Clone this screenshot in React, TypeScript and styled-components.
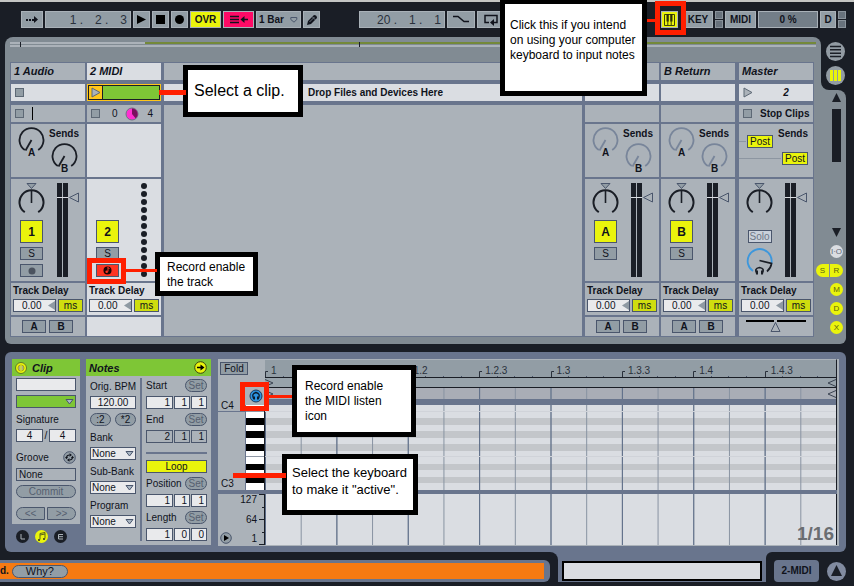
import React from "react";
import styled, { createGlobalStyle, css } from "styled-components";

const c = {
  ink: "#1a1e26",
  panel: "#818b93",
  slate: "#69758d",
  face: "#abb2b9",
  light: "#dadde2",
  button: "#929da5",
  edge: "#4a566c",
  field: "#e9eaec",
  yellow: "#eaf40c",
  lime: "#cfdd0f",
  green: "#7ec636",
  orange: "#f67a12",
  red: "#ff1f00",
  text: "#10131c",
};

const GlobalStyle = createGlobalStyle`
  *, *::before, *::after { box-sizing: border-box; }
  body { margin: 0; background: ${c.ink}; }
  button, input, select { font: inherit; color: inherit; margin: 0; padding: 0; border-radius: 0; }
  svg { display: block; flex: none; }
`;

const Page = styled.div`
  position: relative;
  display: flex;
  flex-direction: column;
  overflow: hidden;
  background: ${c.ink};
  color: ${c.text};
  font-family: "Liberation Sans", Arial, sans-serif;
  font-size: 10px;
  line-height: 12px;
`;

/* ---------- toolbar ---------- */

const Toolbar = styled.header`
  display: flex;
  align-items: flex-start;
  gap: 2px;
  height: 37px;
  padding: 9px 8px 0 21px;
  border-top: 2px solid #c4c6c4;
`;

const ToolButton = styled.button<{ $w: number; $bg?: string }>`
  display: flex;
  align-items: center;
  justify-content: center;
  flex: none;
  gap: 6px;
  width: ${(p) => p.$w}px;
  height: 17px;
  border: 1px solid #a9b1b8;
  background: ${(p) => p.$bg ?? "#929da5"};
  font-weight: bold;
`;

const TimeDisplay = styled.output`
  display: flex;
  align-items: center;
  justify-content: flex-end;
  gap: 12px;
  flex: none;
  width: 86px;
  height: 17px;
  padding-right: 3px;
  border: 1px solid #a9b1b8;
  background: #929da5;
  color: #2a313c;
  font-size: 12px;
`;

const TimePart = styled.span`
  text-align: right;
  white-space: pre;
`;

const Spacer = styled.div<{ $w?: number }>`
  flex: ${(p) => (p.$w ? "none" : "1")};
  width: ${(p) => (p.$w ? `${p.$w}px` : "auto")};
`;

const Leds = styled.div`
  display: grid;
  gap: 1px;
  width: 8px;
`;

const Led = styled.span`
  height: 8px;
  border: 1px solid #8a939b;
  background: #68727c;
`;

/* ---------- session view ---------- */

const Session = styled.main`
  display: flex;
  margin: 0 8px 8px 5px;
`;

const SessionBody = styled.div`
  flex: 1;
  min-width: 0;
  padding: 5px 5px 7px;
  border-radius: 8px 8px 0 6px;
  background: ${c.panel};
`;

const Overview = styled.div`
  display: grid;
  gap: 1px;
  position: relative;
  margin-bottom: 15px;
`;

const OverviewLane = styled.div`
  display: flex;
  height: 2px;
  background: ${c.face};
`;

const OverviewSpan = styled.span`
  flex: 1;
  margin-left: 135px;
  background: #74893a;
`;

const OverviewTick = styled.span<{ $x: string; $w: number }>`
  position: absolute;
  top: 0;
  left: ${(p) => p.$x};
  width: ${(p) => p.$w}px;
  height: 5px;
  background: ${c.ink};
`;

const Tracks = styled.div`
  display: flex;
  margin-right: 2px;
  padding: 1px;
  background: ${c.slate};
`;

const Track = styled.section<{ $after?: number }>`
  display: flex;
  flex-direction: column;
  flex: none;
  width: 74px;
  margin-right: ${(p) => p.$after ?? 0}px;
`;

const DropZone = styled.section`
  display: flex;
  flex-direction: column;
  flex: 1;
  margin: 0 3px;
`;

const cell = css<{ $on?: boolean }>`
  background: ${(p) => (p.$on ? c.light : c.face)};
`;

const TrackTitle = styled.h2<{ $on?: boolean }>`
  ${cell}
  height: 17px;
  margin: 0 0 4px;
  padding-left: 3px;
  font-size: 11px;
  font-style: italic;
  line-height: 17px;
`;

const ClipSlot = styled.div`
  display: flex;
  align-items: center;
  height: 17px;
  margin-bottom: 4px;
  padding: 0 4px;
  background: ${c.light};
  font-weight: bold;
`;

const DropHint = styled(ClipSlot)`
  padding-left: calc(50% - 65px);
`;

const DropBody = styled.div`
  flex: 1;
  background: ${c.face};
`;

const ActiveClip = styled.button`
  display: flex;
  height: 17px;
  margin-bottom: 4px;
  border: 1px solid #ffc61a;
  background: ${c.ink};
  padding: 1px;
  gap: 1px;
`;

const ClipLaunch = styled.span`
  display: flex;
  align-items: center;
  justify-content: center;
  width: 13px;
  height: 13px;
  background: #ffc61a;
`;

const ClipColor = styled.span`
  flex: 1;
  height: 13px;
  background: ${c.green};
`;

const StopRow = styled.div`
  display: flex;
  align-items: center;
  height: 17px;
  margin-bottom: 2px;
  padding: 0 4px;
  background: ${c.face};
`;

const StopButton = styled.button`
  flex: none;
  width: 9px;
  height: 9px;
  border: 1px solid #5d6875;
  background: ${c.button};
`;

const StopMeta = styled.span<{ $gap: number; $bold?: boolean }>`
  margin-left: ${(p) => p.$gap}px;
  font-weight: ${(p) => (p.$bold ? "bold" : "normal")};
  white-space: nowrap;
`;

const Caret = styled.span`
  width: 1px;
  height: 13px;
  margin-left: 8px;
  background: #000;
`;

const SendsCell = styled.div<{ $on?: boolean }>`
  ${cell}
  display: flex;
  height: 53px;
  margin-bottom: 2px;
  padding: 2px 0 0 7px;
  gap: 1px;
  font-weight: bold;
`;

const SendsSide = styled.div`
  display: flex;
  flex-direction: column;
  align-items: center;
  width: 36px;
  padding-top: 2px;
  gap: 2px;
`;

const MasterSends = styled.div`
  display: grid;
  grid-template-columns: 1fr auto;
  grid-template-rows: 22px 17px;
  height: 53px;
  margin-bottom: 2px;
  padding: 2px 5px 0 0;
  background: ${c.face};
`;

const SendRoute = styled.div`
  display: flex;
  align-items: flex-end;
`;

const SendsTitle = styled.span`
  padding-top: 2px;
  font-weight: bold;
`;

const WideRoute = styled.div`
  display: flex;
  align-items: flex-end;
  grid-column: 1 / -1;
`;

const Wire = styled.span<{ $grow?: boolean }>`
  flex: ${(p) => (p.$grow ? 1 : "none")};
  width: 7px;
  height: 1px;
  margin: 0 1px 6px 0;
  background: #8d96a1;
`;

const PostButton = styled.button`
  width: 26px;
  height: 13px;
  border: 1px solid ${c.edge};
  background: ${c.yellow};
  line-height: 11px;
`;

const MixerCell = styled.div<{ $on?: boolean; $gap?: number }>`
  ${cell}
  display: flex;
  gap: ${(p) => p.$gap ?? 12}px;
  height: 102px;
  margin-bottom: 2px;
  padding: 4px 0 0 7px;
`;

const MixerSide = styled.div`
  display: flex;
  flex-direction: column;
  align-items: center;
  width: 27px;
  gap: 4px;
`;

const KnobSpace = styled.div`
  height: 33px;
`;

const Activator = styled.button`
  width: 23px;
  height: 23px;
  border: 1px solid ${c.edge};
  background: ${c.yellow};
  font-size: 12px;
  font-weight: bold;
`;

const SmallButton = styled.button<{ $w?: number; $bg?: string; $bold?: boolean; $dim?: boolean }>`
  display: flex;
  align-items: center;
  justify-content: center;
  width: ${(p) => p.$w ?? 23}px;
  height: 13px;
  border: 1px solid ${c.edge};
  background: ${(p) => p.$bg ?? c.button};
  color: ${(p) => (p.$dim ? "#6d7787" : c.text)};
  font-weight: ${(p) => (p.$bold ? "bold" : "normal")};
`;

const SoloSpace = styled.div`
  height: 6px;
`;

const DelayCell = styled.div<{ $on?: boolean }>`
  ${cell}
  display: flex;
  flex-direction: column;
  gap: 2px;
  height: 32px;
  margin-bottom: 2px;
  padding: 2px;
`;

const DelayLabel = styled.label`
  font-weight: bold;
`;

const DelayRow = styled.div`
  display: flex;
  justify-content: space-between;
`;

const DelayField = styled.div`
  display: flex;
  align-items: center;
  width: 43px;
  height: 13px;
  border: 1px solid ${c.edge};
  background: ${c.field};
`;

const DelayInput = styled.input`
  width: 34px;
  height: 11px;
  padding-left: 8px;
  border: 0;
  background: transparent;
`;

const UnitButton = styled.button`
  width: 25px;
  height: 13px;
  border: 1px solid ${c.edge};
  background: ${c.lime};
  line-height: 10px;
`;

const CrossCell = styled.div<{ $on?: boolean }>`
  ${cell}
  display: flex;
  justify-content: center;
  gap: 3px;
  height: 19px;
  padding: 3px 1px 0 0;
`;

const MasterClip = styled.span`
  flex: 1;
  padding-left: 10px;
  font-style: italic;
  text-align: center;
`;

const Rail = styled.aside`
  display: flex;
  flex-direction: column;
  flex: none;
  width: 25px;
  background: linear-gradient(${c.ink} 20px, ${c.panel} 20px, ${c.panel} 53px, ${c.ink} 53px);
`;

const Notch = styled.div`
  display: flex;
  flex-direction: column;
  align-items: flex-end;
  gap: 5px;
  height: 53px;
  padding: 5px 1px 0 0;
  border-bottom-left-radius: 8px;
  background: ${c.ink};
`;

const RailBody = styled.div`
  display: flex;
  flex-direction: column;
  align-items: flex-end;
  flex: 1;
  padding: 3px 3px 10px 0;
  border-radius: 0 8px 6px 0;
  background: ${c.panel};
`;

const Scrollbar = styled.div`
  width: 9px;
  height: 53px;
  margin: 7px 2px auto 0;
  background: ${c.ink};
`;

const RailArrow = styled.button`
  margin-right: 2px;
  border: 0;
  background: none;
`;

const RailToggles = styled.div`
  display: grid;
  justify-items: end;
  gap: 6px;
  margin-top: 8px;
`;

const RailPair = styled.div`
  display: flex;
  gap: 1px;
`;

const RailToggle = styled.button<{ $off?: boolean; $shape?: string }>`
  width: 13px;
  height: 13px;
  border: 0;
  border-radius: ${(p) => p.$shape ?? "7px"};
  background: ${(p) => (p.$off ? c.light : c.yellow)};
  color: ${(p) => (p.$off ? "#5d6778" : "#5c6410")};
  font-size: 8px;
  line-height: 13px;
  white-space: nowrap;
`;

const RoundButton = styled.button`
  border: 0;
  border-radius: 50%;
  background: none;
`;

/* ---------- clip view ---------- */

const ClipView = styled.section`
  display: flex;
  margin: 0 8px 0 5px;
  padding: 7px;
  border-radius: 6px;
  background: ${c.slate};
`;

const ClipColumn = styled.div`
  display: flex;
  flex-direction: column;
  flex: none;
  width: 68px;
  margin-right: 6px;
`;

const BoxHeader = styled.h3`
  display: flex;
  align-items: center;
  height: 17px;
  margin: 0;
  padding: 0 4px 0 3px;
  gap: 5px;
  background: ${c.green};
  font-size: 11px;
  font-style: italic;
`;

const HeaderText = styled.span`
  flex: 1;
`;

const ClipBody = styled.div`
  display: flex;
  flex-direction: column;
  gap: 4px;
  padding: 2px 4px 4px;
  background: ${c.face};
`;

const Field = styled.input<{ $w?: number; $align?: string; $flat?: boolean }>`
  flex: none;
  width: ${(p) => (p.$w ? `${p.$w}px` : "100%")};
  height: 13px;
  padding: 0 2px;
  border: 1px solid ${c.edge};
  background: ${(p) => (p.$flat ? "transparent" : c.field)};
  text-align: ${(p) => p.$align ?? "left"};
`;

const Row = styled.div<{ $top?: number }>`
  display: flex;
  align-items: center;
  justify-content: space-between;
  height: 13px;
  margin-top: ${(p) => p.$top ?? 0}px;
`;

const Caption = styled.label`
  display: flex;
  align-items: flex-end;
  height: 13px;
  line-height: 11px;
  white-space: nowrap;
`;

const Pill = styled.button<{ $w?: number; $dim?: boolean; $shape?: string }>`
  display: flex;
  align-items: center;
  justify-content: center;
  flex: none;
  width: ${(p) => (p.$w ? `${p.$w}px` : "100%")};
  height: 13px;
  border: 1px solid ${c.edge};
  border-radius: ${(p) => p.$shape ?? "7px"};
  background: ${c.button};
  color: ${(p) => (p.$dim ? "#566070" : c.text)};
`;

const SelectBox = styled.div<{ $bg?: string }>`
  display: grid;
  align-items: center;
  height: 13px;
  border: 1px solid ${c.edge};
  background: ${(p) => p.$bg ?? c.field};

  > * { grid-area: 1 / 1; }
  > svg { justify-self: end; margin-right: 1px; pointer-events: none; }
`;

const Select = styled.select`
  appearance: none;
  width: 100%;
  height: 11px;
  padding-left: 1px;
  border: 0;
  background: transparent;
  line-height: 11px;
`;

const ModeIcons = styled.div`
  display: flex;
  gap: 6px;
  padding: 6px 0 0 4px;
`;

const NotesBox = styled.div`
  display: flex;
  flex-direction: column;
  flex: none;
  width: 125px;
  margin-right: 7px;
  background: ${c.face};
`;

const NotesBody = styled.div`
  display: flex;
  gap: 4px;
  padding: 2px 4px 4px;
`;

const NotesLeft = styled.div`
  display: flex;
  flex-direction: column;
  gap: 4px;
  width: 46px;
  padding-top: 1px;
`;

const NotesRight = styled.div`
  display: flex;
  flex-direction: column;
  flex: 1;
  gap: 4px;
  padding-top: 1px;
`;

const Divider = styled.div`
  width: 2px;
  background: ${c.slate};
`;

const Rule = styled.div`
  height: 2px;
  margin: 5px 0 2px;
  background: ${c.slate};
`;

const LoopButton = styled.button`
  height: 13px;
  border: 1px solid ${c.edge};
  background: ${c.yellow};
  line-height: 11px;
`;

/* ---------- note editor ---------- */

const Editor = styled.div`
  display: grid;
  grid-template-columns: 47px 1fr;
  grid-template-rows: 46px 85px 4px 51px;
  flex: 1;
  min-width: 0;
  border-right: 2px solid ${c.face};
  border-bottom: 1px solid ${c.face};
  background: ${c.slate};
  margin-bottom: -1px;
`;

const Gutter = styled.div`
  display: flex;
  flex-direction: column;
  justify-content: space-between;
  padding: 3px 2px 2px;
  background: ${c.face};
`;

const FoldButton = styled.button`
  width: 28px;
  height: 13px;
  border: 1px solid ${c.edge};
  background: ${c.button};
  line-height: 11px;
`;

const ListenButton = styled(RoundButton)`
  align-self: flex-end;
`;

const barLines = css`
  background-image: linear-gradient(to right, #5d6d88 1px, transparent 1px),
    linear-gradient(to right, #8792a1 1px, transparent 1px);
  background-size: calc(100% / 8) 100%, calc(100% / 16) 100%;
`;

const Timeline = styled.div`
  display: flex;
  flex-direction: column;
  border-top: 1px solid ${c.face};
  border-right: 1px solid ${c.ink};
`;

const Ruler = styled.div`
  display: grid;
  grid-template-columns: repeat(8, 1fr);
  height: 18px;
  padding-top: 5px;
  border-bottom: 1px solid ${c.ink};
  background: #929da5;
`;

const Beat = styled.span`
  display: flex;
  align-items: center;
  gap: 2px;
  color: #2a313c;
  background: linear-gradient(#4a566c, #4a566c) 25% 100% / 1px 1px no-repeat,
    linear-gradient(#4a566c, #4a566c) 50% 100% / 1px 1px no-repeat,
    linear-gradient(#4a566c, #4a566c) 75% 100% / 1px 1px no-repeat;
`;

const LoopLane = styled.div`
  display: flex;
  align-items: center;
  justify-content: space-between;
  height: 10px;
  border-bottom: 1px solid ${c.ink};
  background: #98a3ab;
`;

const MarkerLane = styled(LoopLane)`
  height: 11px;
  border: 0;
  background-color: #a9adb6;
  ${barLines}
`;

const KeyGutter = styled.div`
  display: grid;
  grid-template-columns: 28px 19px;
  background: ${c.face};
`;

const Octaves = styled.div`
  display: flex;
  flex-direction: column;
  justify-content: space-between;
  border-right: 1px solid ${c.slate};
`;

const OctaveTop = styled.span`
  height: 12px;
  margin-top: -5px;
  padding-left: 3px;
  border-bottom: 1px solid ${c.slate};
  line-height: 12px;
`;

const OctaveLabel = styled.span`
  padding-left: 3px;
`;

const Keys = styled.div`
  display: grid;
  grid-template-rows: repeat(13, 1fr);
  border-right: 1px solid ${c.ink};
  background: #fff;
`;

const Key = styled.button<{ $black?: boolean; $seam?: boolean }>`
  min-height: 0;
  border: 0;
  border-bottom: ${(p) => (p.$seam ? "1px solid #8f98a5" : "0")};
  background: ${(p) => (p.$black ? "#000" : "#fff")};
`;

const NoteGrid = styled.div`
  display: grid;
  grid-template-rows: repeat(13, 1fr);
  border-right: 1px solid ${c.ink};
`;

const Lane = styled.div<{ $black?: boolean; $seam?: boolean }>`
  background-color: ${(p) => (p.$black ? "#c3c6ca" : c.light)};
  ${barLines}
  border-bottom: ${(p) => (p.$seam ? "1px solid #d0d3d9" : "0")};
`;

const Seam = styled.div`
  grid-column: 1 / -1;
`;

const VelocityScale = styled.div`
  display: grid;
  grid-template-columns: 14px 1fr 5px;
  gap: 2px;
  padding-left: 2px;
  border-right: 1px solid ${c.ink};
  background: ${c.face};
`;

const VelocityLabels = styled.div`
  display: flex;
  flex-direction: column;
  justify-content: space-between;
  text-align: right;
`;

const VelocityTicks = styled.div`
  display: flex;
  flex-direction: column;
  justify-content: space-between;
  align-items: flex-end;
`;

const Tick = styled.span<{ $w: number }>`
  width: ${(p) => p.$w}px;
  height: 1px;
  background: ${c.ink};
`;

const ScaleFoot = styled.div`
  display: flex;
  align-items: flex-end;
`;

const VelocityGrid = styled.div`
  display: flex;
  align-items: flex-end;
  justify-content: flex-end;
  padding: 0 2px 1px 0;
  border-right: 1px solid ${c.ink};
  background-color: ${c.light};
  ${barLines}
  color: #6a6d71;
  font-size: 19px;
  font-weight: bold;
  line-height: 21px;
`;

/* ---------- footer ---------- */

const Footer = styled.footer`
  display: flex;
  height: 34px;
  background: ${c.slate};
`;

const FooterLeft = styled.div`
  flex: 1;
  padding: 8px 8px 4px 0;
  border-top-right-radius: 8px;
  background: ${c.ink};
`;

const StatusFrame = styled.div`
  padding: 3px 6px 3px 0;
  border-radius: 0 6px 6px 0;
  background: ${c.slate};
`;

const Status = styled.div`
  display: flex;
  align-items: center;
  gap: 3px;
  height: 16px;
  background: ${c.orange};
`;

const StatusText = styled.span`
  font-weight: bold;
`;

const WhyButton = styled(Pill)`
  width: 56px;
  font-size: 11px;
`;

const MiniView = styled.div`
  flex: none;
  width: 208px;
  padding: 9px 4px 1px;
  border-bottom: 4px solid ${c.ink};
`;

const MiniFrame = styled.div`
  height: 20px;
  border: 2px solid #000;
  background: ${c.light};
`;

const FooterRight = styled.div`
  display: flex;
  align-items: flex-start;
  flex: none;
  gap: 8px;
  padding: 8px 8px 0;
  border-top-left-radius: 6px;
  background: ${c.ink};
`;

const TrackTab = styled.button`
  width: 45px;
  height: 22px;
  border: 0;
  border-radius: 4px;
  background: ${c.slate};
  font-weight: bold;
`;

/* ---------- annotations ---------- */

const Note = styled.p<{ $x: string; $y: number; $w: number; $h: number; $pad: string; $size?: number; $line?: number }>`
  position: absolute;
  ${(p) => p.$x};
  top: ${(p) => p.$y}px;
  width: ${(p) => p.$w}px;
  height: ${(p) => p.$h}px;
  margin: 0;
  padding: ${(p) => p.$pad};
  border: 5px solid #000;
  background: #fff;
  color: #000;
  font-size: ${(p) => p.$size ?? 12}px;
  line-height: ${(p) => p.$line ?? 15}px;
  white-space: pre;
`;

const Frame = styled.div<{ $x: string; $y: number; $w: number; $h: number }>`
  position: absolute;
  ${(p) => p.$x};
  top: ${(p) => p.$y}px;
  width: ${(p) => p.$w}px;
  height: ${(p) => p.$h}px;
  border: 5px solid ${c.red};
  pointer-events: none;
`;

const Link = styled.div<{ $x: string; $y: number; $w: number; $h: number }>`
  position: absolute;
  ${(p) => p.$x};
  top: ${(p) => p.$y}px;
  width: ${(p) => p.$w}px;
  height: ${(p) => p.$h}px;
  background: ${c.red};
`;

/* ---------- drawings ---------- */

const PanKnob = () => (
  <svg width="27" height="33" viewBox="0 0 27 33" fill="none">
    <path d="M9 .5h9l-4.500 5z" fill={c.button} stroke={c.edge} />
    <path d="M6.800 29.200A12 12 0 1 1 20.200 29.200" stroke={c.ink} strokeWidth="2" />
    <path d="M13.500 7v13" stroke={c.ink} strokeWidth="1.600" />
  </svg>
);

const SendKnob = ({ name, dim }: { name: string; dim?: boolean }) => {
  const stroke = dim ? "#78859a" : c.ink;
  return (
    <svg width="27" height="31" viewBox="0 0 27 31" fill="none">
      <path d="M6.800 24A12 12 0 1 1 20.200 24" stroke={stroke} strokeWidth="1.800" />
      <path d="M13.500 14 7.500 24.500" stroke={stroke} strokeWidth="1.800" />
      <text x="13.500" y="29.500" textAnchor="middle" fontSize="10" fontWeight="bold" fill={c.text}>
        {name}
      </text>
    </svg>
  );
};

const CueKnob = () => (
  <svg width="27" height="29" viewBox="0 0 27 29" fill="none">
    <path d="M7 24A12 12 0 1 1 25.300 17" stroke="#3d97dc" strokeWidth="1.800" />
    <path d="M13.500 13.500 25.500 16.500Q25 21 21 24.500" stroke={c.ink} strokeWidth="1.800" />
    <path d="M11.300 26.500Q7.500 21.500 13.500 20.500 19.500 21.500 15.700 26.500" stroke={c.ink} strokeWidth="1.600" />
    <path d="M9.500 23.500h2.500v4H10zM17.500 23.500H15v4h2z" fill={c.ink} />
  </svg>
);

const Meter = () => (
  <svg width="24" height="94" viewBox="0 0 24 94">
    <path d="M0 0h5v94H0zM6 0h5v94H6z" fill={c.ink} />
    <path d="M0 14h11v1H0z" fill={c.light} />
    <path d="M12.500 14.500 21.500 10v9z" fill={c.face} stroke={c.edge} />
  </svg>
);

const MidiMeter = () => (
  <svg width="6" height="96" viewBox="0 0 6 96">
    {Array.from({ length: 12 }, (_, i) => (
      <circle key={i} cx="3" cy={3 + i * 8} r="3" fill={c.ink} />
    ))}
  </svg>
);

const Down = () => (
  <svg width="9" height="6" viewBox="0 0 9 6">
    <path d="M1 .5h7L4.500 5z" fill="#a9b6c3" stroke={c.edge} />
  </svg>
);

const LaunchIcon = ({ fill = c.face }: { fill?: string }) => (
  <svg width="10" height="11" viewBox="0 0 10 11">
    <path d="M1 1v9l8-4.500z" fill={fill} stroke="#5d6875" />
  </svg>
);

const RecordIcon = () => (
  <svg width="8" height="8" viewBox="0 0 8 8">
    <circle cx="4" cy="4" r="3.500" fill="#4b535f" />
  </svg>
);

const MidiRecordIcon = () => (
  <svg width="9" height="9" viewBox="0 0 9 9">
    <circle cx="4.500" cy="4.500" r="4" fill="#1a0505" />
    <path d="M5 1v4.500M5 1.500l1.500 1.500" stroke="#ff3322" fill="none" />
    <circle cx="3.700" cy="5.800" r="1.300" fill="#ff3322" />
  </svg>
);

const Headphones = () => (
  <svg width="14" height="14" viewBox="0 0 14 14" fill="none">
    <circle cx="7" cy="7" r="6" fill="#2d93e0" stroke="#1c3a5c" />
    <path d="M4.800 10Q2 4.500 7 3.500 12 4.500 9.200 10" stroke="#0b1a2b" strokeWidth="1.300" />
    <path d="M4 7.500h2v3H4.500zM10 7.500H8v3h1.500z" fill="#0b1a2b" />
  </svg>
);

const Corner = () => (
  <svg width="4" height="12" viewBox="0 0 4 12">
    <path d="M.5 12V6.500H3" fill="none" stroke="#2a313c" />
  </svg>
);

const Chevron = ({ left }: { left?: boolean }) => (
  <svg width="9" height="8" viewBox="0 0 9 8">
    <path d={left ? "M9 .5 1 4l8 3.500" : "M0 .5 8 4 0 7.500"} fill="none" stroke="#3b4452" />
  </svg>
);

/* ---------- composed parts ---------- */

const Sends = ({ dim }: { dim?: boolean }) => (
  <SendsCell>
    <SendKnob name="A" dim={dim} />
    <SendsSide>
      <span>Sends</span>
      <SendKnob name="B" dim={dim} />
    </SendsSide>
  </SendsCell>
);

const Delay = ({ id, on }: { id: string; on?: boolean }) => (
  <DelayCell $on={on}>
    <DelayLabel htmlFor={id}>Track Delay</DelayLabel>
    <DelayRow>
      <DelayField>
        <DelayInput id={id} defaultValue="0.00" />
        <svg width="7" height="9" viewBox="0 0 7 9">
          <path d="M7 0v9L0 4.500z" fill="#8f9aa3" />
        </svg>
      </DelayField>
      <UnitButton>ms</UnitButton>
    </DelayRow>
  </DelayCell>
);

const Cross = () => (
  <CrossCell>
    <SmallButton $w={24} $bold>A</SmallButton>
    <SmallButton $w={24} $bold>B</SmallButton>
  </CrossCell>
);

const ReturnTrack = ({ name, after }: { name: string; after: number }) => (
  <Track $after={after}>
    <TrackTitle>{name} Return</TrackTitle>
    <ClipSlot />
    <StopRow />
    <Sends dim />
    <MixerCell>
      <MixerSide>
        <PanKnob />
        <Activator>{name}</Activator>
        <SmallButton>S</SmallButton>
      </MixerSide>
      <Meter />
    </MixerCell>
    <Delay id={`delay-${name}`} />
    <Cross />
  </Track>
);

const Triple = ({ name, values, flat }: { name: string; values: number[]; flat?: boolean }) => (
  <Row>
    {values.map((v, i) => (
      <Field key={i} $w={i ? 16 : 27} $align="right" $flat={flat} aria-label={`${name} ${i + 1}`} defaultValue={v} />
    ))}
  </Row>
);

const SetRow = ({ name }: { name: string }) => (
  <Row>
    <span>{name}</span>
    <Pill $w={22} $dim>Set</Pill>
  </Row>
);

const Chooser = ({ id, label }: { id: string; label: string }) => (
  <>
    <Caption htmlFor={id}>{label}</Caption>
    <SelectBox>
      <Select id={id}>
        <option>None</option>
      </Select>
      <Down />
    </SelectBox>
  </>
);

const blackRows = [2, 4, 6, 9, 11];
const seamRows = [0, 7];
const rows = Array.from({ length: 13 }, (_, i) => i);
const beats = ["1", "1.1.3", "1.2", "1.2.3", "1.3", "1.3.3", "1.4", "1.4.3"];

export default function App() {
  return (
    <Page>
      <GlobalStyle />
      <Toolbar>
        <ToolButton $w={22} aria-label="Nudge">
          <svg width="14" height="9" viewBox="0 0 14 9" fill={c.text}>
            <path d="M1 4h2v2H1zM4 4h2v2H4zM7 4h2v2H7zM9 1l4 3.500L9 8z" />
          </svg>
        </ToolButton>
        <TimeDisplay>
          <TimePart>1 .</TimePart>
          <TimePart>2 .</TimePart>
          <TimePart>3</TimePart>
        </TimeDisplay>
        <ToolButton $w={17} aria-label="Play">
          <svg width="11" height="11" viewBox="0 0 11 11"><path d="M1 1v9l9-4.500z" /></svg>
        </ToolButton>
        <ToolButton $w={17} aria-label="Stop">
          <svg width="9" height="9" viewBox="0 0 9 9"><path d="M0 0h9v9H0z" /></svg>
        </ToolButton>
        <ToolButton $w={17} aria-label="Record">
          <svg width="9" height="9" viewBox="0 0 9 9"><circle cx="4.500" cy="4.500" r="4.500" /></svg>
        </ToolButton>
        <ToolButton $w={31} $bg={c.yellow}>OVR</ToolButton>
        <ToolButton $w={31} $bg="#ff0a66" aria-label="Back to arrangement">
          <svg width="18" height="9" viewBox="0 0 18 9" stroke={c.text} fill={c.text}>
            <path d="M0 1.500h9M0 4.500h9M0 7.500h9M13 4.500h5" strokeWidth="1.600" />
            <path d="M14.500 1v7l-4-3.500z" stroke="none" />
          </svg>
        </ToolButton>
        <ToolButton $w={45}>
          1 Bar
          <svg width="8" height="6" viewBox="0 0 8 6"><path d="M.8.5h6v2L4 5.200.8 2.500z" fill="none" stroke={c.edge} /></svg>
        </ToolButton>
        <ToolButton $w={17} aria-label="Draw mode">
          <svg width="12" height="12" viewBox="0 0 12 12">
            <path d="M1 11l1-4 6-6q3 0 3 3l-6 6z" fill={c.text} />
            <path d="M3.500 8 8.500 3M6 2.500 9.500 6" stroke="#8d98a2" strokeWidth=".7" />
          </svg>
        </ToolButton>
        <Spacer $w={35} />
        <TimeDisplay>
          <TimePart>20 .</TimePart>
          <TimePart>1 .</TimePart>
          <TimePart>1</TimePart>
        </TimeDisplay>
        <ToolButton $w={28} aria-label="Punch in">
          <svg width="16" height="9" viewBox="0 0 16 9"><path d="M0 1.500h5l6 5h5" fill="none" stroke={c.text} strokeWidth="1.500" /></svg>
        </ToolButton>
        <ToolButton $w={28} aria-label="Loop">
          <svg width="14" height="12" viewBox="0 0 14 12">
            <path d="M5 8.500H1v-7h12v7H9" fill="none" stroke={c.text} strokeWidth="1.500" />
            <path d="M10 5v7L6 8.500z" fill={c.text} />
          </svg>
        </ToolButton>
        <Spacer />
        <ToolButton $w={17} $bg={c.yellow} aria-label="Computer MIDI keyboard">
          <svg width="11" height="12" viewBox="0 0 11 12">
            <path d="M.5.5h10v11H.5zM3.800 7v5M7.200 7v5" fill="none" stroke="#3f4406" />
            <path d="M2.500 0h2.300v7.500H2.500zM6.200 0h2.300v7.500H6.200z" fill="#2c3008" />
          </svg>
        </ToolButton>
        <Spacer $w={1} />
        <ToolButton $w={30}>KEY</ToolButton>
        <Leds><Led /><Led /></Leds>
        <ToolButton $w={31}>MIDI</ToolButton>
        <ToolButton $w={60} $bg="#737e88">0 %</ToolButton>
        <ToolButton $w={16}>D</ToolButton>
        <Leds><Led /><Led /></Leds>
      </Toolbar>

      <Session>
        <SessionBody>
          <Overview>
            <OverviewLane><OverviewSpan /></OverviewLane>
            <OverviewLane />
            <OverviewTick $x="10px" $w={1} />
            <OverviewTick $x="43.3%" $w={1} />
          </Overview>
          <Tracks>
            <Track $after={2}>
              <TrackTitle>1 Audio</TrackTitle>
              <ClipSlot><StopButton aria-label="Stop clip" /></ClipSlot>
              <StopRow><StopButton aria-label="Stop track 1" /><Caret /></StopRow>
              <Sends />
              <MixerCell>
                <MixerSide>
                  <PanKnob />
                  <Activator>1</Activator>
                  <SmallButton>S</SmallButton>
                  <SmallButton aria-label="Arm track 1"><RecordIcon /></SmallButton>
                </MixerSide>
                <Meter />
              </MixerCell>
              <Delay id="delay-1" />
              <Cross />
            </Track>
            <Track>
              <TrackTitle $on>2 MIDI</TrackTitle>
              <ActiveClip aria-label="Launch clip">
                <ClipLaunch><LaunchIcon /></ClipLaunch>
                <ClipColor />
              </ActiveClip>
              <StopRow>
                <StopButton aria-label="Stop track 2" />
                <StopMeta $gap={12}>0</StopMeta>
                <StopMeta $gap={7}>
                  <svg width="14" height="14" viewBox="0 0 14 14">
                    <circle cx="7" cy="7" r="6" fill="#ff2fd0" stroke="#6b7383" />
                    <path d="M7 7V1.500A5.500 5.500 0 0 1 10.500 11.300z" fill="#7a0f5e" />
                  </svg>
                </StopMeta>
                <StopMeta $gap={9}>4</StopMeta>
              </StopRow>
              <SendsCell $on />
              <MixerCell $on $gap={20}>
                <MixerSide>
                  <KnobSpace />
                  <Activator>2</Activator>
                  <SmallButton>S</SmallButton>
                  <SmallButton $bg="#ff3322" aria-label="Arm track 2"><MidiRecordIcon /></SmallButton>
                </MixerSide>
                <MidiMeter />
              </MixerCell>
              <Delay id="delay-2" on />
              <CrossCell $on />
            </Track>
            <DropZone>
              <TrackTitle />
              <DropHint>Drop Files and Devices Here</DropHint>
              <DropBody />
            </DropZone>
            <ReturnTrack name="A" after={2} />
            <ReturnTrack name="B" after={4} />
            <Track>
              <TrackTitle>Master</TrackTitle>
              <ClipSlot><LaunchIcon /><MasterClip>2</MasterClip></ClipSlot>
              <StopRow>
                <StopButton aria-label="Stop all clips" />
                <StopMeta $gap={8} $bold>Stop Clips</StopMeta>
              </StopRow>
              <MasterSends>
                <SendRoute><Wire /><PostButton>Post</PostButton></SendRoute>
                <SendsTitle>Sends</SendsTitle>
                <WideRoute><Wire $grow /><PostButton>Post</PostButton></WideRoute>
              </MasterSends>
              <MixerCell>
                <MixerSide>
                  <PanKnob />
                  <SoloSpace />
                  <SmallButton $w={24} $bg="#c9d0da" $dim>Solo</SmallButton>
                  <CueKnob />
                </MixerSide>
                <Meter />
              </MixerCell>
              <Delay id="delay-master" />
              <CrossCell>
                <svg width="60" height="13" viewBox="0 0 60 13">
                  <path d="M0 0h28v2H0zM31 0h29v2H31z" />
                  <path d="M29.500 2.500 34 11.500h-9z" fill={c.face} stroke={c.edge} />
                </svg>
              </CrossCell>
            </Track>
          </Tracks>
        </SessionBody>
        <Rail>
          <Notch>
            <RoundButton aria-label="Arrangement view">
              <svg width="19" height="19" viewBox="0 0 19 19">
                <circle cx="9.500" cy="9.500" r="9.500" fill="#929ba3" />
                <path d="M4 4.500h11M4 7.800h11M4 11.200h11M4 14.500h11" stroke={c.ink} strokeWidth="1.600" />
              </svg>
            </RoundButton>
            <RoundButton aria-label="Session view">
              <svg width="19" height="19" viewBox="0 0 19 19">
                <circle cx="9.500" cy="9.500" r="9.500" fill="#929ba3" />
                <path d="M4 4h3v11H4zM8 4h3v11H8zM12 4h3v11h-3z" fill={c.yellow} />
              </svg>
            </RoundButton>
          </Notch>
          <RailBody>
            <RailArrow aria-label="Scroll up">
              <svg width="9" height="9" viewBox="0 0 9 9"><path d="M4.500 0 9 9H0z" fill={c.ink} /></svg>
            </RailArrow>
            <Scrollbar />
            <RailArrow aria-label="Scroll down">
              <svg width="9" height="9" viewBox="0 0 9 9"><path d="M0 0h9L4.500 9z" fill={c.ink} /></svg>
            </RailArrow>
            <RailToggles>
              <RailToggle $off>I·O</RailToggle>
              <RailPair>
                <RailToggle $shape="7px 0 0 7px">S</RailToggle>
                <RailToggle $shape="0 7px 7px 0">R</RailToggle>
              </RailPair>
              <RailToggle>M</RailToggle>
              <RailToggle>D</RailToggle>
              <RailToggle>X</RailToggle>
            </RailToggles>
          </RailBody>
        </Rail>
      </Session>

      <ClipView>
        <ClipColumn>
          <BoxHeader>
            <svg width="12" height="12" viewBox="0 0 12 12">
              <circle cx="6" cy="6" r="5.500" fill={c.yellow} stroke="#5e7a2a" />
              <circle cx="6" cy="6" r="3" fill="#aab088" stroke="#a8a818" />
              <path d="M6 3v6" stroke={c.yellow} />
            </svg>
            <HeaderText>Clip</HeaderText>
          </BoxHeader>
          <ClipBody>
            <Field aria-label="Clip name" />
            <SelectBox $bg={c.green}>
              <Select aria-label="Clip color" />
              <Down />
            </SelectBox>
            <Caption htmlFor="sig">Signature</Caption>
            <Row>
              <Field id="sig" $w={27} $align="center" defaultValue="4" />
              <span>/</span>
              <Field aria-label="Signature denominator" $w={27} $align="center" defaultValue="4" />
            </Row>
            <Row $top={5}>
              <label htmlFor="groove">Groove</label>
              <RoundButton aria-label="Hot-swap groove">
                <svg width="13" height="13" viewBox="0 0 13 13" fill="none">
                  <circle cx="6.500" cy="6.500" r="5.800" fill={c.button} stroke={c.edge} />
                  <path d="M3.500 6.500Q3.800 4 6.500 4M9.500 6.500Q9.200 9 6.500 9" stroke={c.text} strokeWidth="1.200" />
                  <path d="M6.500 2.200l2.500 1.800-2.500 1.800zM6.500 7.200 4 9l2.500 1.800zM2 6h3L3.500 8.200zM8 7h3L9.500 4.800z" fill={c.text} />
                </svg>
              </RoundButton>
            </Row>
            <Field id="groove" $flat defaultValue="None" />
            <Pill $dim>Commit</Pill>
            <Row $top={5}>
              <Pill $w={29} $dim $shape="7px 0 0 7px">&lt;&lt;</Pill>
              <Pill $w={29} $dim $shape="0 7px 7px 0">&gt;&gt;</Pill>
            </Row>
          </ClipBody>
          <ModeIcons>
            <RoundButton aria-label="Launch box">
              <svg width="13" height="13" viewBox="0 0 13 13" fill="none">
                <circle cx="6.500" cy="6.500" r="6.500" fill={c.ink} />
                <path d="M5 4v5h4" stroke={c.face} />
              </svg>
            </RoundButton>
            <RoundButton aria-label="Notes box">
              <svg width="13" height="13" viewBox="0 0 13 13" fill="none">
                <circle cx="6.500" cy="6.500" r="6.500" fill={c.yellow} />
                <path d="M5 9.500V3.500l5-1v6M5 5l5-1" stroke="#59601a" />
                <path d="M3 9h2v2H3zM8 8h2v2H8z" fill="#59601a" />
              </svg>
            </RoundButton>
            <RoundButton aria-label="Envelopes box">
              <svg width="13" height="13" viewBox="0 0 13 13" fill="none">
                <circle cx="6.500" cy="6.500" r="6.500" fill={c.ink} />
                <path d="M9 4.500H4.500v4.500H9M4.500 6.700H9" stroke={c.face} />
              </svg>
            </RoundButton>
          </ModeIcons>
        </ClipColumn>

        <NotesBox>
          <BoxHeader>
            <HeaderText>Notes</HeaderText>
            <RoundButton aria-label="Show notes editor">
              <svg width="13" height="13" viewBox="0 0 13 13">
                <circle cx="6.500" cy="6.500" r="5.800" fill={c.yellow} stroke="#3b4410" />
                <path d="M3 5.700h3.500V3.500l4 3-4 3V7.300H3z" />
              </svg>
            </RoundButton>
          </BoxHeader>
          <NotesBody>
            <NotesLeft>
              <Caption htmlFor="bpm">Orig. BPM</Caption>
              <Field id="bpm" $align="center" defaultValue="120.00" />
              <Row>
                <Pill $w={21}>:2</Pill>
                <Pill $w={21}>*2</Pill>
              </Row>
              <Chooser id="bank" label="Bank" />
              <Chooser id="subbank" label="Sub-Bank" />
              <Chooser id="program" label="Program" />
            </NotesLeft>
            <Divider />
            <NotesRight>
              <SetRow name="Start" />
              <Triple name="Start" values={[1, 1, 1]} />
              <SetRow name="End" />
              <Triple name="End" values={[2, 1, 1]} flat />
              <Rule />
              <LoopButton>Loop</LoopButton>
              <SetRow name="Position" />
              <Triple name="Position" values={[1, 1, 1]} />
              <SetRow name="Length" />
              <Triple name="Length" values={[1, 0, 0]} />
            </NotesRight>
          </NotesBody>
        </NotesBox>

        <Editor>
          <Gutter>
            <FoldButton>Fold</FoldButton>
            <ListenButton aria-label="MIDI listen"><Headphones /></ListenButton>
          </Gutter>
          <Timeline>
            <Ruler>
              {beats.map((b) => (
                <Beat key={b}><Corner />{b}</Beat>
              ))}
            </Ruler>
            <LoopLane><Chevron /><Chevron left /></LoopLane>
            <MarkerLane><Chevron /><Chevron left /></MarkerLane>
          </Timeline>
          <KeyGutter>
            <Octaves>
              <OctaveTop>C4</OctaveTop>
              <OctaveLabel>C3</OctaveLabel>
            </Octaves>
            <Keys>
              {rows.map((i) => (
                <Key key={i} $black={blackRows.includes(i)} $seam={seamRows.includes(i)} aria-label={`Key ${13 - i}`} />
              ))}
            </Keys>
          </KeyGutter>
          <NoteGrid>
            {rows.map((i) => (
              <Lane key={i} $black={blackRows.includes(i)} $seam={seamRows.includes(i)} />
            ))}
          </NoteGrid>
          <Seam />
          <VelocityScale>
            <ScaleFoot>
              <RoundButton aria-label="Preview">
                <svg width="12" height="14" viewBox="0 0 12 14">
                  <circle cx="6" cy="7" r="5.300" fill={c.button} stroke={c.edge} />
                  <path d="M4 4v6l5-3z" />
                </svg>
              </RoundButton>
            </ScaleFoot>
            <VelocityLabels>
              <span>127</span>
              <span>64</span>
              <span>1</span>
            </VelocityLabels>
            <VelocityTicks>
              <Tick $w={5} />
              <Tick $w={2} />
              <Tick $w={5} />
              <Tick $w={2} />
              <Tick $w={5} />
            </VelocityTicks>
          </VelocityScale>
          <VelocityGrid>1/16</VelocityGrid>
        </Editor>
      </ClipView>

      <Footer>
        <FooterLeft>
          <StatusFrame>
            <Status>
              <StatusText>d.</StatusText>
              <WhyButton>Why?</WhyButton>
            </Status>
          </StatusFrame>
        </FooterLeft>
        <MiniView><MiniFrame /></MiniView>
        <FooterRight>
          <TrackTab>2-MIDI</TrackTab>
          <RoundButton aria-label="Toggle detail view">
            <svg width="19" height="22" viewBox="0 0 19 22">
              <circle cx="9.500" cy="11.500" r="9.500" fill="#818ba0" />
              <path d="M9.500 5 15 16H4z" fill={c.ink} />
            </svg>
          </RoundButton>
        </FooterRight>
      </Footer>

      <Note $x="right: 207px" $y={-1} $w={147} $h={97} $pad="14px 0 0 5px">
        {"Click this if you intend\non using your computer\nkeyboard to input notes"}
      </Note>
      <Link $x="right: 199px" $y={19} $w={8} $h={3} />
      <Frame $x="right: 168px" $y={1} $w={31} $h={34} />

      <Note $x="left: 183px" $y={65} $w={120} $h={52} $pad="12px 0 0 6px" $size={16} $line={18}>
        Select a clip.
      </Note>
      <Link $x="left: 159px" $y={90} $w={27} $h={5} />

      <Note $x="left: 155px" $y={252} $w={103} $h={44} $pad="3px 0 0 7px">
        {"Record enable\nthe track"}
      </Note>
      <Link $x="left: 126px" $y={269} $w={31} $h={3} />
      <Frame $x="left: 87px" $y={258} $w={39} $h={26} />

      <Note $x="left: 292px" $y={365} $w={124} $h={72} $pad="9px 0 0 8px">
        {"Record enable\nthe MIDI listen\nicon"}
      </Note>
      <Link $x="left: 269px" $y={395} $w={23} $h={3} />
      <Frame $x="left: 240px" $y={382} $w={29} $h={29} />

      <Note $x="left: 282px" $y={454} $w={136} $h={61} $pad="5px 0 0 5px" $size={13} $line={17}>
        {'Select the keyboard\nto make it "active".'}
      </Note>
      <Link $x="left: 233px" $y={473} $w={53} $h={5} />
    </Page>
  );
}
